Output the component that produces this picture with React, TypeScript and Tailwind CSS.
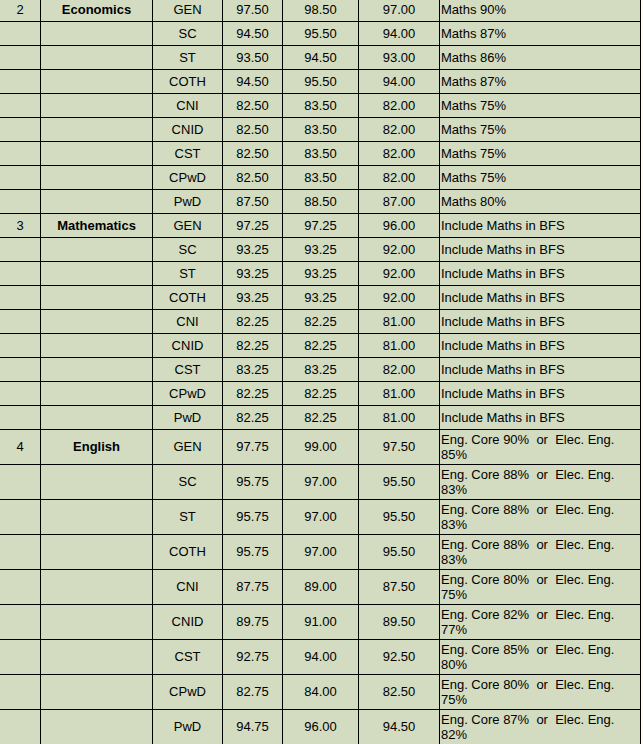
import React from "react"

type Row = {
  no?: string
  subject?: string
  cat: string
  a: string
  b: string
  c: string
  req: React.ReactNode
}

const cats = ["GEN", "SC", "ST", "COTH", "CNI", "CNID", "CST", "CPwD", "PwD"]

const econ = [
  ["97.50", "98.50", "97.00", "90"],
  ["94.50", "95.50", "94.00", "87"],
  ["93.50", "94.50", "93.00", "86"],
  ["94.50", "95.50", "94.00", "87"],
  ["82.50", "83.50", "82.00", "75"],
  ["82.50", "83.50", "82.00", "75"],
  ["82.50", "83.50", "82.00", "75"],
  ["82.50", "83.50", "82.00", "75"],
  ["87.50", "88.50", "87.00", "80"],
]

const maths = [
  ["97.25", "97.25", "96.00"],
  ["93.25", "93.25", "92.00"],
  ["93.25", "93.25", "92.00"],
  ["93.25", "93.25", "92.00"],
  ["82.25", "82.25", "81.00"],
  ["82.25", "82.25", "81.00"],
  ["83.25", "83.25", "82.00"],
  ["82.25", "82.25", "81.00"],
  ["82.25", "82.25", "81.00"],
]

const english = [
  ["97.75", "99.00", "97.50", "90", "85"],
  ["95.75", "97.00", "95.50", "88", "83"],
  ["95.75", "97.00", "95.50", "88", "83"],
  ["95.75", "97.00", "95.50", "88", "83"],
  ["87.75", "89.00", "87.50", "80", "75"],
  ["89.75", "91.00", "89.50", "82", "77"],
  ["92.75", "94.00", "92.50", "85", "80"],
  ["82.75", "84.00", "82.50", "80", "75"],
  ["94.75", "96.00", "94.50", "87", "82"],
]

function Cell({ children, tall, bold, left }: { children?: React.ReactNode; tall?: boolean; bold?: boolean; left?: boolean }) {
  return (
    <div
      className={`flex items-center border-l border-t border-black ${tall ? "h-[35px]" : "h-[24px]"} ${
        left ? "justify-start pl-px leading-[15px]" : "justify-center"
      } ${bold ? "font-bold" : ""}`}
    >
      {children}
    </div>
  )
}

export default function App() {
  const rows: (Row & { tall?: boolean })[] = [
    ...econ.map((r, i) => ({
      no: i === 0 ? "2" : "",
      subject: i === 0 ? "Economics" : "",
      cat: cats[i],
      a: r[0],
      b: r[1],
      c: r[2],
      req: `Maths ${r[3]}%`,
    })),
    ...maths.map((r, i) => ({
      no: i === 0 ? "3" : "",
      subject: i === 0 ? "Mathematics" : "",
      cat: cats[i],
      a: r[0],
      b: r[1],
      c: r[2],
      req: "Include Maths in BFS",
    })),
    ...english.map((r, i) => ({
      no: i === 0 ? "4" : "",
      subject: i === 0 ? "English" : "",
      cat: cats[i],
      a: r[0],
      b: r[1],
      c: r[2],
      tall: true,
      req: (
        <span>
          {`Eng. Core ${r[3]}%\u00a0 or\u00a0 Elec. Eng.`}
          <br />
          {`${r[4]}%`}
        </span>
      ),
    })),
  ]

  return (
    <div
      className="h-screen overflow-hidden bg-[#fdfdea] text-[13px] text-black"
      style={{ fontFamily: '"Liberation Sans", Arial, sans-serif' }}
    >
      <div className="-ml-px -mt-[3px] grid w-[642px] grid-cols-[41px_112px_70px_60px_76px_81px_201px] border-r border-black bg-[#d3dcc0]">
        {rows.map((r, i) => (
          <React.Fragment key={i}>
            <Cell tall={r.tall}>{r.no}</Cell>
            <Cell tall={r.tall} bold>
              {r.subject}
            </Cell>
            <Cell tall={r.tall}>{r.cat}</Cell>
            <Cell tall={r.tall}>{r.a}</Cell>
            <Cell tall={r.tall}>{r.b}</Cell>
            <Cell tall={r.tall}>{r.c}</Cell>
            <Cell tall={r.tall} left>
              {r.req}
            </Cell>
          </React.Fragment>
        ))}
      </div>
    </div>
  )
}
